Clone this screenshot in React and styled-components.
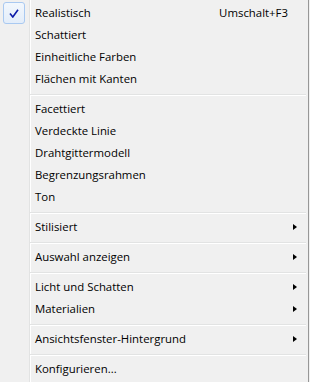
import React from "react";
import styled, { createGlobalStyle } from "styled-components";

const Global = createGlobalStyle`
  html, body { margin: 0; padding: 0; background: #f0f0f0; }
  body { font-family: "Open Sans", "Noto Sans", sans-serif; }
`;

const Menu = styled.div`
  box-sizing: border-box;
  width: 309px;
  height: 382px;
  padding-top: 2px;
  border-right: 1px solid #979797;
  display: flex;
  flex-direction: column;
  background: linear-gradient(
    to right,
    #f0f0f0 0 29px,
    #e2e3e3 29px 30px,
    #ffffff 30px 31px,
    #f0f0f0 31px
  );
  font-size: 11.4px;
  color: #000;
`;

const Item = styled.div`
  position: relative;
  height: 22px;
  display: flex;
  align-items: center;
  padding-left: 35px;
  padding-right: 10px;
  line-height: 22px;
  white-space: nowrap;
`;

const Label = styled.span`
  flex: 1;
`;

const Shortcut = styled.span`
  margin-right: 10px;
`;

const Arrow = styled.span`
  width: 0;
  height: 0;
  border-top: 3.5px solid transparent;
  border-bottom: 3.5px solid transparent;
  border-left: 4px solid #000;
  margin-right: 1px;
`;

const CheckBox = styled.span`
  position: absolute;
  left: 3px;
  top: 0;
  box-sizing: border-box;
  width: 22px;
  height: 22px;
  border: 1px solid #a9c9f1;
  border-radius: 3px;
  background: linear-gradient(to bottom, #f2f7fd, #e3edfa);
  display: flex;
  align-items: center;
  justify-content: center;
`;

const Separator = styled.div`
  height: 8px;
  margin-left: 30px;
  margin-right: 2px;
  background: linear-gradient(
    to bottom,
    transparent 0 4px,
    #e2e3e3 4px 5px,
    #ffffff 5px 6px,
    transparent 6px
  );
`;

const Check = () => (
  <svg width="10" height="9" viewBox="0 0 10 9">
    <path d="M1 4.5 L3.8 8 L9 0.8" fill="none" stroke="#0c1aa8" strokeWidth="1.6" />
  </svg>
);

const groups = [
  [
    { label: "Realistisch", checked: true, shortcut: "Umschalt+F3" },
    { label: "Schattiert" },
    { label: "Einheitliche Farben" },
    { label: "Flächen mit Kanten" },
  ],
  [
    { label: "Facettiert" },
    { label: "Verdeckte Linie" },
    { label: "Drahtgittermodell" },
    { label: "Begrenzungsrahmen" },
    { label: "Ton" },
  ],
  [{ label: "Stilisiert", sub: true }],
  [{ label: "Auswahl anzeigen", sub: true }],
  [
    { label: "Licht und Schatten", sub: true },
    { label: "Materialien", sub: true },
  ],
  [{ label: "Ansichtsfenster-Hintergrund", sub: true }],
  [{ label: "Konfigurieren..." }],
];

export default function App() {
  return (
    <>
      <Global />
      <Menu>
        {groups.map((g, gi) => (
          <React.Fragment key={gi}>
            {gi > 0 && <Separator />}
            {g.map((it) => (
              <Item key={it.label}>
                {it.checked && (
                  <CheckBox>
                    <Check />
                  </CheckBox>
                )}
                <Label>{it.label}</Label>
                {it.shortcut && <Shortcut>{it.shortcut}</Shortcut>}
                {it.sub && <Arrow />}
              </Item>
            ))}
          </React.Fragment>
        ))}
      </Menu>
    </>
  );
}
